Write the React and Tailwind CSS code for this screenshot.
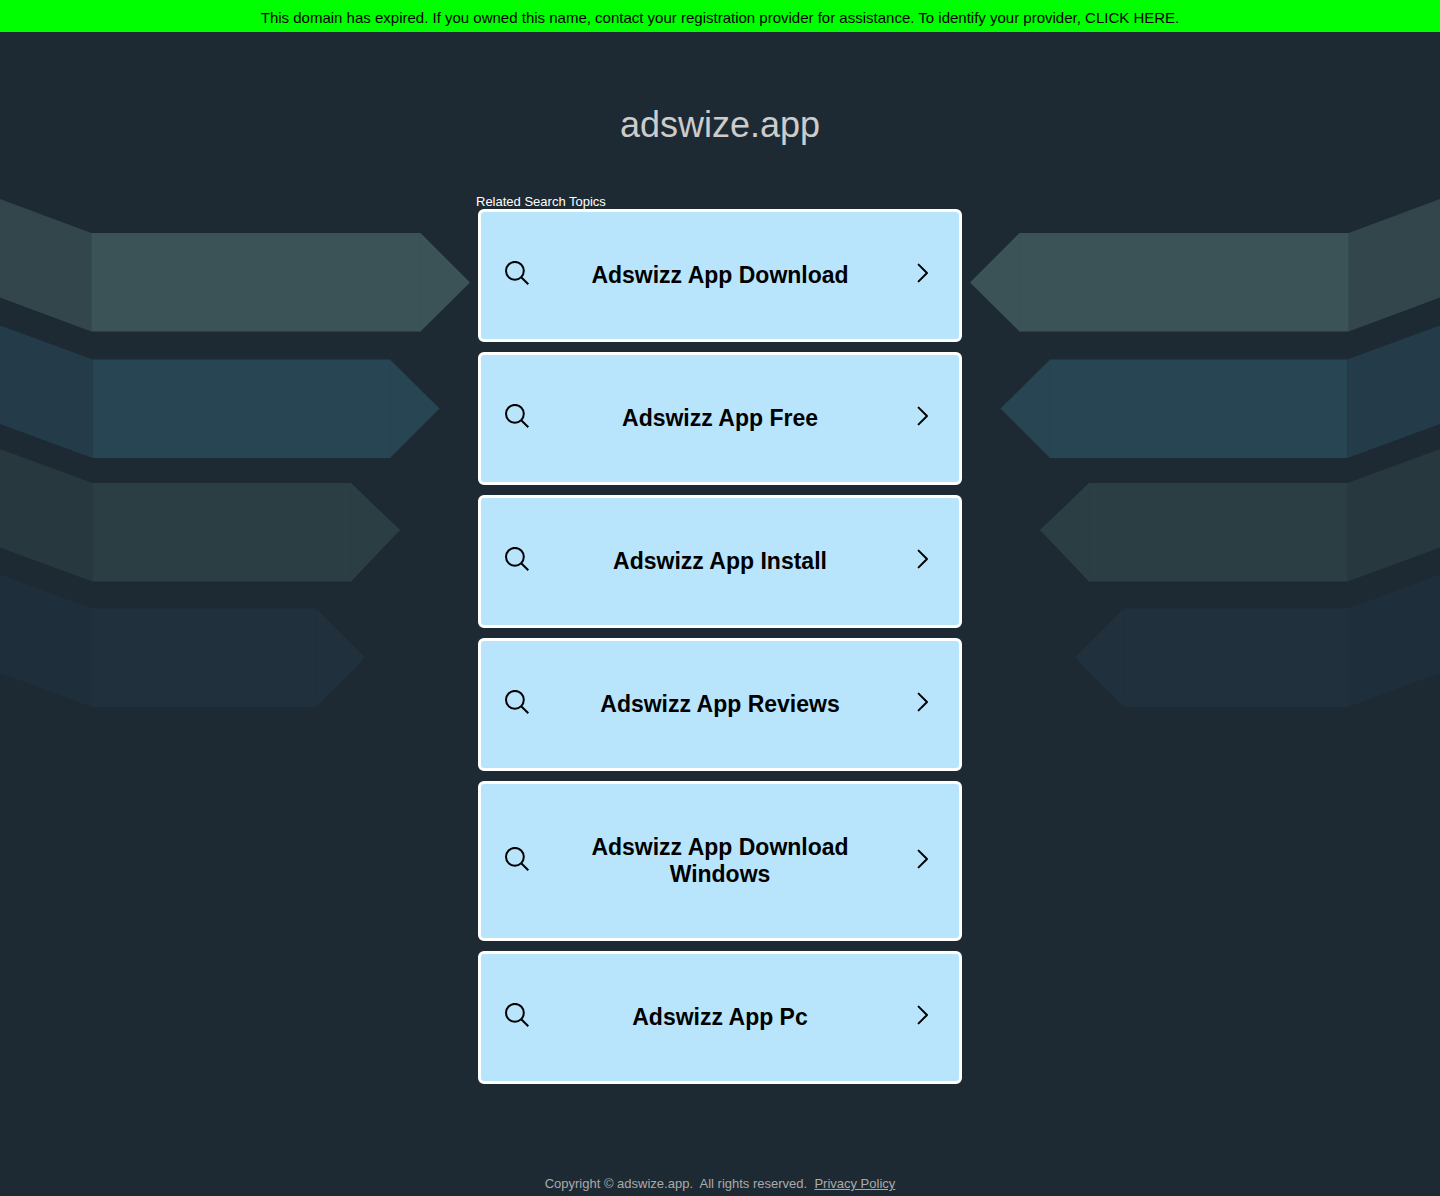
import React from 'react';

const topics = [
  'Adswizz App Download',
  'Adswizz App Free',
  'Adswizz App Install',
  'Adswizz App Reviews',
  'Adswizz App Download Windows',
  'Adswizz App Pc',
];

// Ribbon geometry: y of the outer edge, y of the bar, x of the fold and shoulder, tip point
const ribbons = [
  { edge: 199, top: 233, fold: 91.3, shoulder: 420.5, tipX: 470, tipY: 282.5, dark: '#32464c', bar: '#3b5357', seam: '#385054' },
  { edge: 325.5, top: 359.5, fold: 92.7, shoulder: 390, tipX: 439.5, tipY: 408.5, dark: '#243c4a', bar: '#284553', seam: '#274351' },
  { edge: 449, top: 483, fold: 92.3, shoulder: 351, tipX: 400, tipY: 530, dark: '#27383f', bar: '#2b3e43', seam: '#2b3e43' },
  { edge: 574.5, top: 608.5, fold: 92, shoulder: 316, tipX: 365, tipY: 657.5, dark: '#1e2e3b', bar: '#20313d', seam: '#1f303b' },
];

const Ribbons = ({ className }) => (
  <svg viewBox="0 0 480 720" width="480" height="720" aria-hidden="true" className={className}>
    {ribbons.map(r => (
      <g key={r.top}>
        <path d={`M0 ${r.edge}L${r.fold} ${r.top}V${r.top + 98.5}L0 ${r.edge + 98.5}Z`} fill={r.dark} />
        <path
          d={`M${r.fold} ${r.top}H${r.shoulder}L${r.tipX} ${r.tipY}L${r.shoulder} ${r.top + 98.5}H${r.fold}Z`}
          fill={r.bar}
        />
        <path d={`M${r.shoulder} ${r.top}V${r.top + 98.5}`} stroke={r.seam} />
      </g>
    ))}
  </svg>
);

const SearchIcon = () => (
  <svg viewBox="0 0 24 29" fill="none" stroke="currentColor" strokeWidth="2" aria-hidden="true" className="w-6 h-[29px] -my-px shrink-0">
    <circle cx="9.9" cy="9.8" r="8.9" />
    <path d="M16.2 16.2L23.3 23.3" />
  </svg>
);

const ChevronIcon = () => (
  <svg viewBox="0 0 24 29" fill="none" stroke="currentColor" strokeWidth="2" strokeLinecap="round" strokeLinejoin="round" aria-hidden="true" className="w-6 h-[29px] -my-px shrink-0">
    <path d="M7.6 3.6L16 12L7.6 20.4" />
  </svg>
);

const TopicLink = ({ title }) => (
  <a
    href="#"
    className="flex items-center px-6 py-[50px] bg-[#b8e5fc] border-3 border-white rounded-md text-black"
  >
    <SearchIcon />
    <span className="flex-1 px-10 text-center text-[23px] leading-[27px] font-bold">{title}</span>
    <ChevronIcon />
  </a>
);

const App = () => {
  return (
    <div className="relative min-h-screen overflow-hidden flex flex-col bg-[#1e2a33] font-['Liberation_Sans',Arial,sans-serif]">
      {/* Background */}
      <Ribbons className="absolute top-0 left-0" />
      <Ribbons className="absolute top-0 right-0 -scale-x-100" />

      {/* Expiry notice */}
      <div className="relative bg-[#00ff00] text-black text-center text-[15px] leading-4 pt-[10px] pb-[6px]">
        <a href="#">
          This domain has expired. If you owned this name, contact your registration provider for assistance. To
          identify your provider, CLICK HERE.
        </a>
      </div>

      <h1 className="relative pt-[72px] text-center text-4xl leading-[42px] text-[#cccccc]">adswize.app</h1>

      {/* Topics */}
      <main className="relative w-full max-w-[488px] mx-auto mt-12">
        <h2 className="text-[13px] leading-[15px] text-white">Related Search Topics</h2>
        <nav className="flex flex-col gap-[10px] px-0.5">
          {topics.map(topic => (
            <TopicLink key={topic} title={topic} />
          ))}
        </nav>
      </main>

      <footer className="relative mt-auto pt-10 pb-1 text-center text-[13px] leading-4 text-[#aaaaaa]">
        Copyright © adswize.app.&nbsp; All rights reserved.&nbsp;{' '}
        <a href="#" className="underline">Privacy Policy</a>
      </footer>
    </div>
  );
};

export default App;
